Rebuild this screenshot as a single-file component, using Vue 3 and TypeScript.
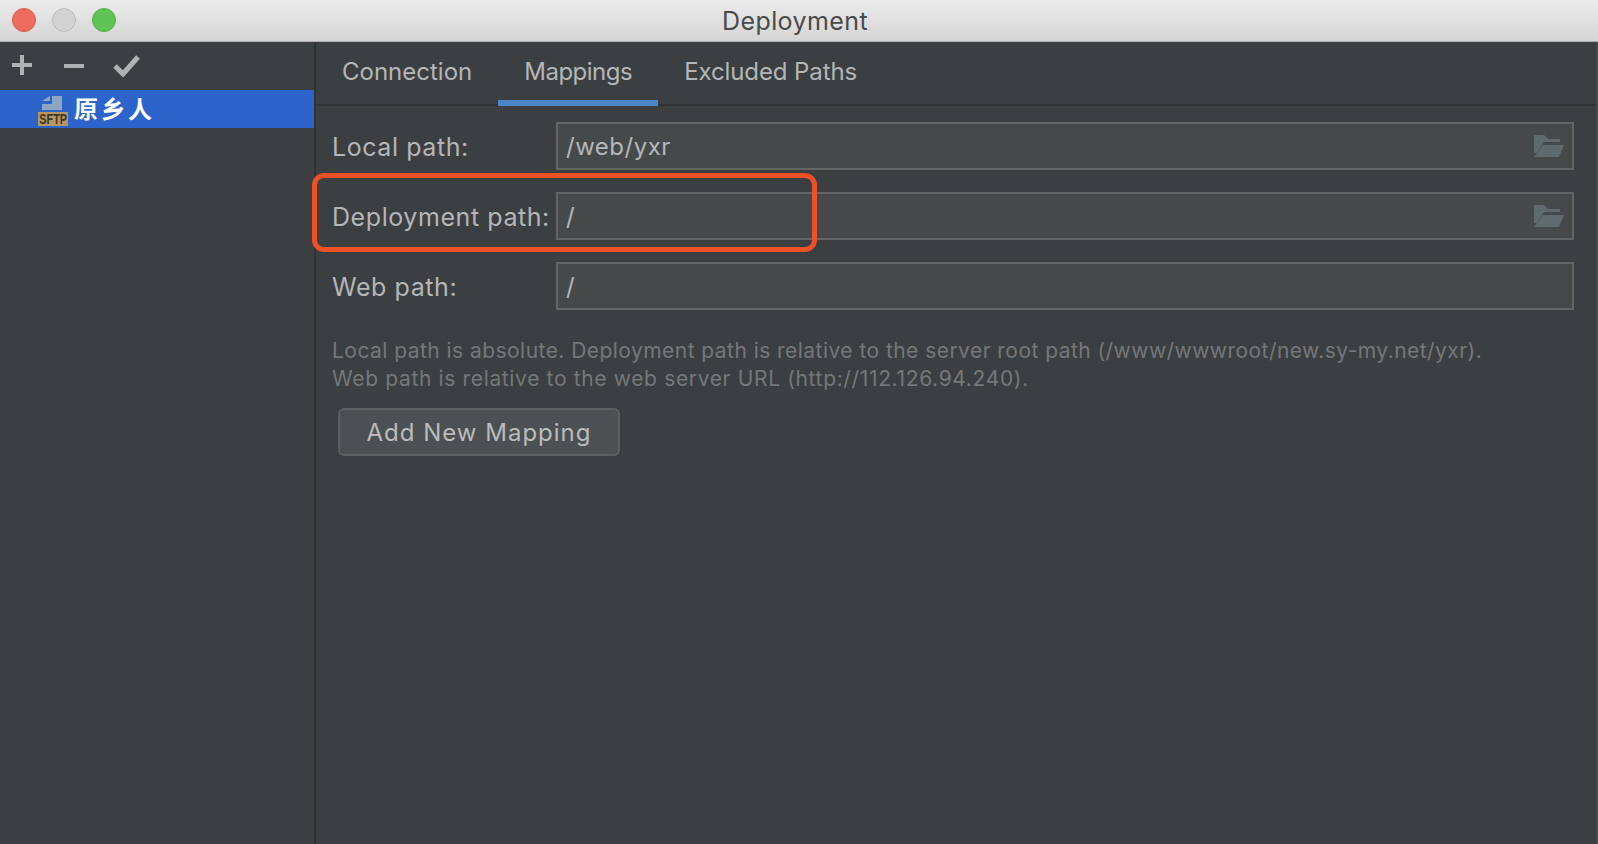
<script setup lang="ts">
const tabs = ['Connection', 'Mappings', 'Excluded Paths']
const rows = [
  { label: 'Local path:', value: '/web/yxr', folder: true },
  { label: 'Deployment path:', value: '/', folder: true },
  { label: 'Web path:', value: '/', folder: false },
]
</script>

<template>
  <div class="window">
    <header class="titlebar">
      <div class="lights">
        <span class="light red"></span>
        <span class="light grey"></span>
        <span class="light green"></span>
      </div>
      <div class="title">Deployment</div>
    </header>
    <div class="body">
      <aside class="sidebar">
        <div class="tools">
          <svg width="24" height="24" viewBox="0 0 24 24"><path d="M12 2v20M2 12h20" stroke="#afb1b3" stroke-width="4" fill="none" /></svg>
          <svg width="24" height="24" viewBox="0 0 24 24"><path d="M2 12h20" stroke="#afb1b3" stroke-width="4" fill="none" /></svg>
          <svg width="30" height="24" viewBox="0 0 30 24"><path d="M3 13l8 8L26 4" stroke="#afb1b3" stroke-width="5" fill="none" /></svg>
        </div>
        <div class="server">
          <span class="server-icon">
            <svg width="20" height="14" viewBox="0 0 20 14" class="server-doc">
              <path d="M0 5L8 0v5zM10 0h10v14H0V8h10z" fill="#8fa6c2" />
            </svg>
            <span class="sftp"><span class="sftp-text">SFTP</span></span>
          </span>
          <span class="server-name">原乡人</span>
        </div>
      </aside>
      <main class="content">
        <nav class="tabs">
          <div v-for="t in tabs" :key="t" class="tab" :class="{ active: t === 'Mappings' }">{{ t }}</div>
        </nav>
        <section class="form">
          <div v-for="r in rows" :key="r.label" class="row">
            <label class="label">{{ r.label }}</label>
            <div class="input">
              <span>{{ r.value }}</span>
              <svg v-if="r.folder" class="folder" width="30" height="22" viewBox="0 0 30 22">
                <path d="M0 0h10l4 4h12v3H10L3 18H0z" fill="#5f6a6e" />
                <path d="M9 10h21l-5 12H0z" fill="#5f6a6e" />
              </svg>
            </div>
          </div>
          <div class="hint">
            <div class="hint-first">Local path is absolute. Deployment path is relative to the server root path (/www/wwwroot/new.sy-my.net/yxr).</div>
            <div class="hint-second">Web path is relative to the web server URL (http://112.126.94.240).</div>
          </div>
          <button class="add" type="button">Add New Mapping</button>
        </section>
        <div class="highlight"></div>
      </main>
    </div>
  </div>
</template>

<style>
html, body { margin: 0; background: #3c3f41; }
</style>

<style scoped>
.window {
  width: 1598px;
  height: 844px;
  display: flex;
  flex-direction: column;
  overflow: hidden;
  background: #3c3f41;
  font-family: Inter, "Noto Sans CJK SC", sans-serif;
  color: #b4b6b8;
}
.titlebar {
  height: 41px;
  flex: none;
  position: relative;
  display: flex;
  align-items: center;
  justify-content: center;
  background: linear-gradient(#ebebeb, #d5d5d5);
  border-bottom: 1px solid #aeaeae;
}
.lights {
  position: absolute;
  left: 12px;
  top: 8px;
  display: flex;
  gap: 16px;
}
.light {
  width: 24px;
  height: 24px;
  border-radius: 50%;
  box-sizing: border-box;
}
.red { background: #ee6b60; border: 1px solid #dc5a50; }
.grey { background: #d2d2d2; border: 1px solid #bcbcbc; }
.green { background: #5fc454; border: 1px solid #4fae45; }
.title { font-size: 25px; letter-spacing: 0.4px; color: #4a4a4a; margin-left: -8px; }
.body { flex: 1; display: flex; min-height: 0; }
.sidebar {
  width: 314px;
  flex: none;
  border-right: 2px solid #323232;
}
.tools {
  height: 48px;
  box-sizing: border-box;
  padding: 11px 0 0 10px;
  display: flex;
  gap: 27px;
  align-items: flex-start;
}
.tools svg:nth-child(2) { position: relative; left: 1px; top: 1px; }
.server {
  height: 38px;
  background: #2d64cb;
  display: flex;
  align-items: center;
  padding-left: 38px;
  gap: 6px;
}
.server-icon { position: relative; width: 30px; height: 36px; }
.server-doc { position: absolute; left: 4px; top: 5px; }
.sftp {
  position: absolute;
  left: 0;
  bottom: 1px;
  width: 30px;
  height: 14px;
  background: #b8965f;
  color: #3a352b;
  display: flex;
  justify-content: center;
  font: 700 15px/14px "Liberation Sans", sans-serif;
}
.sftp-text { display: block; transform: scaleX(0.72); }
.server-name { color: #fff; font-weight: 700; font-size: 24px; letter-spacing: 3px; padding-bottom: 4px; font-family: "Noto Sans CJK SC", sans-serif; }
.content { flex: 1; position: relative; border-right: 2px solid #47494b; }
.tabs {
  height: 64px;
  box-sizing: border-box;
  display: flex;
  border-bottom: 2px solid #323232;
}
.tab {
  padding: 0 26px;
  font-size: 24px;
  line-height: 60px;
  height: 64px;
  box-sizing: border-box;
}
.tab:last-child { letter-spacing: -0.1px; }
.active { border-bottom: 6px solid #4a88c7; letter-spacing: -0.5px; }
.form { padding: 16px 22px 0 16px; }
.row { display: flex; align-items: center; height: 48px; margin-bottom: 22px; }
.label { width: 224px; font-size: 25px; letter-spacing: 0.57px; flex: none; padding-top: 1px; }
.input {
  flex: 1;
  height: 48px;
  box-sizing: border-box;
  border: 2px solid #646464;
  background: #45494a;
  display: flex;
  align-items: center;
  justify-content: space-between;
  padding: 0 8px;
  font-size: 24px;
  letter-spacing: 0.5px;
}
.hint {
  padding-top: 5px;
  color: #757779;
  font-size: 21px;
  line-height: 28px;
}
.hint-first { letter-spacing: 0.455px; }
.hint-second { letter-spacing: 0.65px; }
.add {
  display: block;
  margin: 15px 0 0 6px;
  width: 282px;
  height: 48px;
  border-radius: 6px;
  border: 2px solid #5c5f60;
  background: #4c5052;
  color: #bbbbbb;
  font: 24px Inter, sans-serif;
  letter-spacing: 1px;
}
.highlight {
  position: absolute;
  left: -4px;
  top: 131px;
  width: 505px;
  height: 79px;
  box-sizing: border-box;
  border: 5px solid #ee5026;
  border-radius: 12px;
}
</style>
